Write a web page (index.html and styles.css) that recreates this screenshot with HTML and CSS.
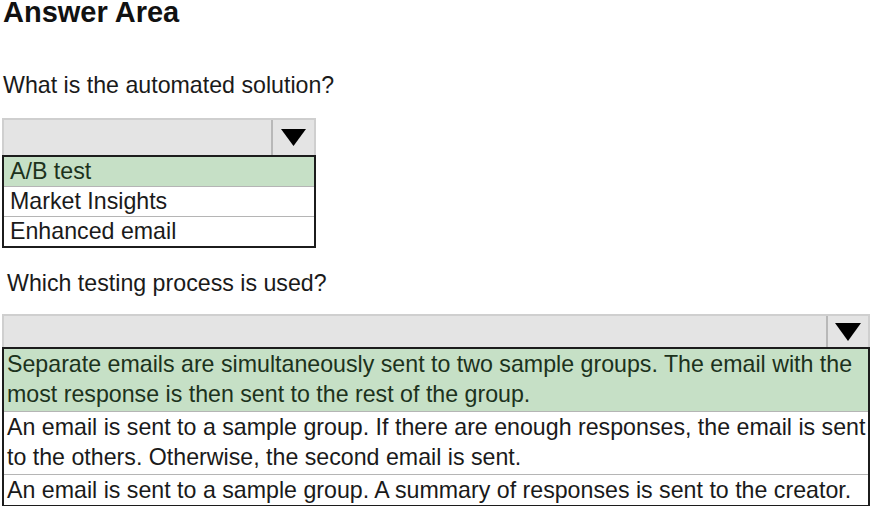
FILE: index.html
```html
<!DOCTYPE html>
<html>
<head>
<meta charset="utf-8">
<link rel="stylesheet" href="styles.css">
</head>
<body>
<div class="page">
  <h1 class="title">Answer Area</h1>

  <p class="question q1">What is the automated solution?</p>
  <div class="dropdown dd1">
    <div class="select">
      <div class="field"></div>
      <div class="arrow">
        <svg width="25" height="17" viewBox="0 0 25 17"><polygon points="0,0 25,0 12.5,17" fill="#000"/></svg>
      </div>
    </div>
    <div class="list">
      <div class="opt selected">A/B test</div>
      <div class="opt">Market Insights</div>
      <div class="opt">Enhanced email</div>
    </div>
  </div>

  <p class="question q2">Which testing process is used?</p>
  <div class="dropdown dd2">
    <div class="select">
      <div class="field"></div>
      <div class="arrow">
        <svg width="26" height="18" viewBox="0 0 26 18"><polygon points="0,0 26,0 13,18" fill="#000"/></svg>
      </div>
    </div>
    <div class="list">
      <div class="opt selected multi">Separate emails are simultaneously sent to two sample groups. The email with the<br>most response is then sent to the rest of the group.</div>
      <div class="opt multi">An email is sent to a sample group. If there are enough responses, the email is sent<br>to the others. Otherwise, the second email is sent.</div>
      <div class="opt">An email is sent to a sample group. A summary of responses is sent to the creator.</div>
    </div>
  </div>
</div>
</body>
</html>
```

FILE: styles.css
```css
html, body {
  margin: 0;
  padding: 0;
  background: #fff;
}

.page {
  font-family: "Liberation Sans", Arial, sans-serif;
  color: #1a1a1a;
  padding: 0 0 0 2px;
  display: flex;
  flex-direction: column;
  align-items: flex-start;
}

.title {
  margin: 0 0 0 1px;
  font-size: 29px;
  line-height: 24px;
  font-weight: bold;
  color: #111;
}

.question {
  margin: 0;
  font-size: 23.2px;
  line-height: 30px;
}

.q1 {
  margin-top: 46px;
  margin-left: 1px;
}

.q2 {
  margin-top: 20px;
  margin-left: 5px;
}

.dropdown {
  display: flex;
  flex-direction: column;
}

.dd1 {
  width: 314px;
  margin-top: 18px;
}

.dd2 {
  width: 868px;
  margin-top: 16px;
}

.select {
  display: flex;
  background: #e4e4e4;
  border: 2px solid #cfcfcf;
  border-bottom: none;
  box-sizing: border-box;
}

.dd1 .select { height: 37px; }
.dd2 .select { height: 33px; }

.field {
  flex: 1;
}

.arrow {
  width: 41px;
  border-left: 2px solid #b8b8b8;
  display: flex;
  align-items: center;
  justify-content: center;
}

.dd2 .arrow {
  width: 40px;
}

.list {
  border: 2px solid #1c1c1c;
  display: flex;
  flex-direction: column;
}

.opt {
  font-size: 23.2px;
  line-height: 29px;
  padding: 0 0 0 6px;
  background: #fff;
  white-space: nowrap;
}

.opt + .opt {
  border-top: 1px solid #b5b5b5;
}

.dd2 .opt {
  padding-left: 3px;
  line-height: 30px;
}

.dd2 .opt.multi {
  padding-bottom: 2px;
}

.opt.selected {
  background: #c6e0c6;
  color: #1c321c;
}
```
